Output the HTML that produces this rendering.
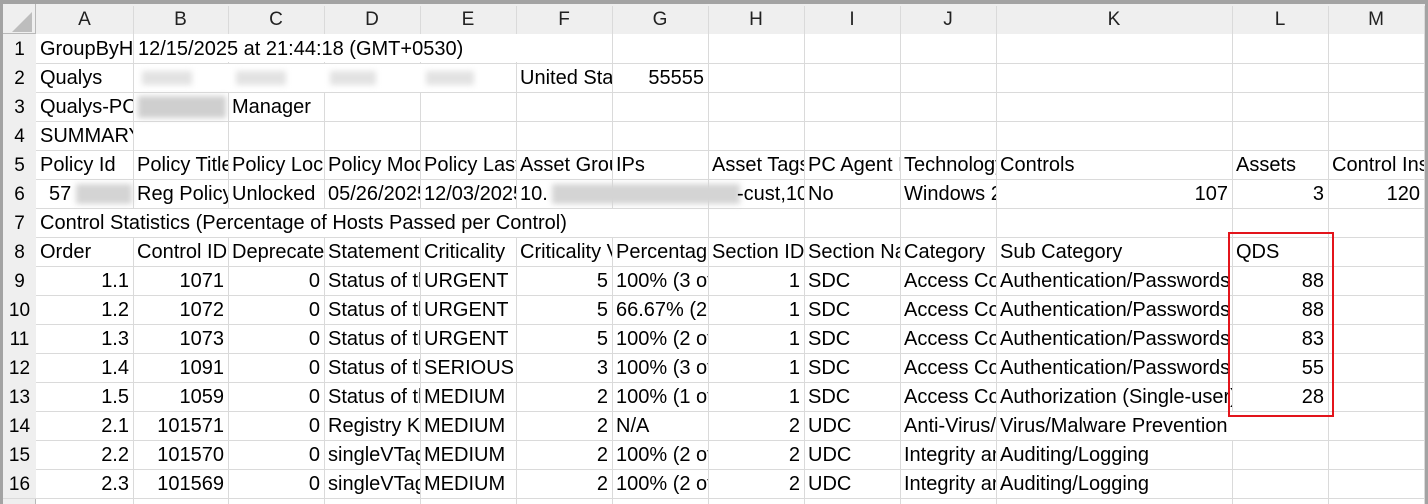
<!DOCTYPE html>
<html><head><meta charset="utf-8"><style>
body{margin:0;width:1428px;height:504px;overflow:hidden;background:#fff;font-family:"Liberation Sans",Arial,sans-serif;font-size:20px;color:#000;position:relative}
.c{position:absolute;height:29px;line-height:31px;white-space:nowrap;overflow:hidden;padding:0 4px;box-sizing:border-box}
.r{text-align:right}
.h{position:absolute;top:4px;height:30px;line-height:32px;text-align:center;font-size:19px;background:#efefef;color:#222}
.v{position:absolute;width:1px;background:#dadada}
.hl{position:absolute;height:1px;background:#dadada}
.rn{position:absolute;left:3px;width:33px;text-align:center;background:#efefef;height:29px;line-height:31px;font-size:19px}
.b{position:absolute;background:#d4d4d4;filter:blur(3px)}
</style></head><body>
<div style="position:absolute;left:0;top:0;width:1428px;height:4px;background:#a3a3a3"></div>
<div style="position:absolute;left:0;top:0;width:3px;height:504px;background:#a3a3a3"></div>
<div style="position:absolute;right:0;top:0;width:3px;height:504px;background:#a3a3a3"></div>
<div style="position:absolute;left:3px;top:4px;width:1422px;height:30px;background:#efefef"></div>
<div style="position:absolute;left:3px;top:4px;width:33px;height:500px;background:#efefef"></div>
<div style="position:absolute;left:12px;top:12px;width:0;height:0;border-left:20px solid transparent;border-bottom:20px solid #bdbdbd"></div>
<div style="position:absolute;left:3px;top:33px;width:1422px;height:1px;background:#b8b8b8"></div>
<div style="position:absolute;left:35px;top:4px;width:1px;height:500px;background:#b8b8b8"></div>
<div class="h" style="left:36px;width:97px">A</div><div class="h" style="left:133px;width:95px">B</div><div class="h" style="left:228px;width:96px">C</div><div class="h" style="left:324px;width:96px">D</div><div class="h" style="left:420px;width:96px">E</div><div class="h" style="left:516px;width:96px">F</div><div class="h" style="left:612px;width:96px">G</div><div class="h" style="left:708px;width:96px">H</div><div class="h" style="left:804px;width:96px">I</div><div class="h" style="left:900px;width:96px">J</div><div class="h" style="left:996px;width:236px">K</div><div class="h" style="left:1232px;width:96px">L</div><div class="h" style="left:1328px;width:96px">M</div>
<div class="v" style="left:133px;top:6px;height:498px"></div><div class="v" style="left:228px;top:6px;height:498px"></div><div class="v" style="left:324px;top:6px;height:498px"></div><div class="v" style="left:420px;top:6px;height:498px"></div><div class="v" style="left:516px;top:6px;height:498px"></div><div class="v" style="left:612px;top:6px;height:498px"></div><div class="v" style="left:708px;top:6px;height:498px"></div><div class="v" style="left:804px;top:6px;height:498px"></div><div class="v" style="left:900px;top:6px;height:498px"></div><div class="v" style="left:996px;top:6px;height:498px"></div><div class="v" style="left:1232px;top:6px;height:498px"></div><div class="v" style="left:1328px;top:6px;height:498px"></div><div class="v" style="left:1424px;top:6px;height:498px"></div>
<div class="hl" style="left:3px;top:63px;width:1422px"></div><div class="hl" style="left:3px;top:92px;width:1422px"></div><div class="hl" style="left:3px;top:121px;width:1422px"></div><div class="hl" style="left:3px;top:150px;width:1422px"></div><div class="hl" style="left:3px;top:179px;width:1422px"></div><div class="hl" style="left:3px;top:208px;width:1422px"></div><div class="hl" style="left:3px;top:237px;width:1422px"></div><div class="hl" style="left:3px;top:266px;width:1422px"></div><div class="hl" style="left:3px;top:295px;width:1422px"></div><div class="hl" style="left:3px;top:324px;width:1422px"></div><div class="hl" style="left:3px;top:353px;width:1422px"></div><div class="hl" style="left:3px;top:382px;width:1422px"></div><div class="hl" style="left:3px;top:411px;width:1422px"></div><div class="hl" style="left:3px;top:440px;width:1422px"></div><div class="hl" style="left:3px;top:469px;width:1422px"></div><div class="hl" style="left:3px;top:498px;width:1422px"></div>
<div class="rn" style="top:34px">1</div><div class="rn" style="top:63px">2</div><div class="rn" style="top:92px">3</div><div class="rn" style="top:121px">4</div><div class="rn" style="top:150px">5</div><div class="rn" style="top:179px">6</div><div class="rn" style="top:208px">7</div><div class="rn" style="top:237px">8</div><div class="rn" style="top:266px">9</div><div class="rn" style="top:295px">10</div><div class="rn" style="top:324px">11</div><div class="rn" style="top:353px">12</div><div class="rn" style="top:382px">13</div><div class="rn" style="top:411px">14</div><div class="rn" style="top:440px">15</div><div class="rn" style="top:469px">16</div>
<div class="c" style="left:36px;top:34px;width:97px">GroupByHost</div>
<div class="c" style="left:134px;top:34px;width:390px;height:28px;background:#fff">12/15/2025 at 21:44:18 (GMT+0530)</div>
<div style="position:absolute;left:134px;top:64px;width:382px;height:28px;background:#fff"></div>
<div class="b" style="left:142px;top:71px;width:50px;height:14px;background:#e2e2e2"></div>
<div class="b" style="left:236px;top:71px;width:50px;height:14px;background:#e2e2e2"></div>
<div class="b" style="left:330px;top:71px;width:46px;height:14px;background:#e2e2e2"></div>
<div class="b" style="left:426px;top:71px;width:48px;height:14px;background:#e2e2e2"></div>
<div class="b" style="left:138px;top:96px;width:88px;height:22px;background:#cfcfcf"></div>
<div class="b" style="left:76px;top:184px;width:56px;height:20px"></div>
<div class="b" style="left:552px;top:184px;width:188px;height:20px"></div>
<div class="c" style="left:36px;top:63px;width:97px">Qualys</div>
<div class="c" style="left:516px;top:63px;width:96px">United States</div>
<div class="c r" style="left:612px;top:63px;width:96px">55555</div>
<div class="c" style="left:36px;top:92px;width:97px">Qualys-PC</div>
<div class="c" style="left:228px;top:92px;width:96px">Manager</div>
<div class="c" style="left:36px;top:121px;width:97px">SUMMARY</div>
<div class="c" style="left:36px;top:150px;width:97px">Policy Id</div><div class="c" style="left:133px;top:150px;width:95px">Policy Title</div><div class="c" style="left:228px;top:150px;width:96px">Policy Locked</div><div class="c" style="left:324px;top:150px;width:96px">Policy Modified</div><div class="c" style="left:420px;top:150px;width:96px">Policy Last</div><div class="c" style="left:516px;top:150px;width:96px">Asset Groups</div><div class="c" style="left:612px;top:150px;width:96px">IPs</div><div class="c" style="left:708px;top:150px;width:96px">Asset Tags</div><div class="c" style="left:804px;top:150px;width:96px">PC Agent I</div><div class="c" style="left:900px;top:150px;width:96px">Technology</div><div class="c" style="left:996px;top:150px;width:236px">Controls</div><div class="c" style="left:1232px;top:150px;width:96px">Assets</div><div class="c" style="left:1328px;top:150px;width:96px">Control Instances</div>
<div class="c" style="left:36px;top:179px;width:40px;padding-left:13px">57</div><div class="c" style="left:133px;top:179px;width:95px">Reg Policy</div><div class="c" style="left:228px;top:179px;width:96px">Unlocked</div><div class="c" style="left:324px;top:179px;width:96px">05/26/2025</div><div class="c" style="left:420px;top:179px;width:96px">12/03/2025</div><div class="c" style="left:516px;top:179px;width:40px">10.</div><div class="c" style="left:737px;top:179px;width:67px;padding:0">-cust,10</div><div class="c" style="left:804px;top:179px;width:96px">No</div><div class="c" style="left:900px;top:179px;width:96px">Windows 2016</div><div class="c r" style="left:996px;top:179px;width:236px">107</div><div class="c r" style="left:1232px;top:179px;width:96px">3</div><div class="c r" style="left:1328px;top:179px;width:96px">120</div>
<div class="c" style="left:36px;top:209px;width:640px;height:28px;line-height:29px;background:#fff">Control Statistics (Percentage of Hosts Passed per Control)</div>
<div class="c" style="left:36px;top:237px;width:97px">Order</div><div class="c" style="left:133px;top:237px;width:95px">Control ID</div><div class="c" style="left:228px;top:237px;width:96px">Deprecated</div><div class="c" style="left:324px;top:237px;width:96px">Statement</div><div class="c" style="left:420px;top:237px;width:96px">Criticality</div><div class="c" style="left:516px;top:237px;width:96px">Criticality Value</div><div class="c" style="left:612px;top:237px;width:96px">Percentage</div><div class="c" style="left:708px;top:237px;width:96px">Section ID</div><div class="c" style="left:804px;top:237px;width:96px">Section Name</div><div class="c" style="left:900px;top:237px;width:96px">Category</div><div class="c" style="left:996px;top:237px;width:236px">Sub Category</div><div class="c" style="left:1232px;top:237px;width:96px">QDS</div>
<div class="c r" style="left:36px;top:266px;width:97px">1.1</div><div class="c r" style="left:133px;top:266px;width:95px">1071</div><div class="c r" style="left:228px;top:266px;width:96px">0</div><div class="c" style="left:324px;top:266px;width:96px">Status of the</div><div class="c" style="left:420px;top:266px;width:96px">URGENT</div><div class="c r" style="left:516px;top:266px;width:96px">5</div><div class="c" style="left:612px;top:266px;width:96px">100% (3 of 3)</div><div class="c r" style="left:708px;top:266px;width:96px">1</div><div class="c" style="left:804px;top:266px;width:96px">SDC</div><div class="c" style="left:900px;top:266px;width:96px">Access Control</div><div class="c" style="left:996px;top:266px;width:236px">Authentication/Passwords</div><div class="c r" style="left:1232px;top:266px;width:96px">88</div>
<div class="c r" style="left:36px;top:295px;width:97px">1.2</div><div class="c r" style="left:133px;top:295px;width:95px">1072</div><div class="c r" style="left:228px;top:295px;width:96px">0</div><div class="c" style="left:324px;top:295px;width:96px">Status of the</div><div class="c" style="left:420px;top:295px;width:96px">URGENT</div><div class="c r" style="left:516px;top:295px;width:96px">5</div><div class="c" style="left:612px;top:295px;width:96px">66.67% (2 of 3)</div><div class="c r" style="left:708px;top:295px;width:96px">1</div><div class="c" style="left:804px;top:295px;width:96px">SDC</div><div class="c" style="left:900px;top:295px;width:96px">Access Control</div><div class="c" style="left:996px;top:295px;width:236px">Authentication/Passwords</div><div class="c r" style="left:1232px;top:295px;width:96px">88</div>
<div class="c r" style="left:36px;top:324px;width:97px">1.3</div><div class="c r" style="left:133px;top:324px;width:95px">1073</div><div class="c r" style="left:228px;top:324px;width:96px">0</div><div class="c" style="left:324px;top:324px;width:96px">Status of the</div><div class="c" style="left:420px;top:324px;width:96px">URGENT</div><div class="c r" style="left:516px;top:324px;width:96px">5</div><div class="c" style="left:612px;top:324px;width:96px">100% (2 of 2)</div><div class="c r" style="left:708px;top:324px;width:96px">1</div><div class="c" style="left:804px;top:324px;width:96px">SDC</div><div class="c" style="left:900px;top:324px;width:96px">Access Control</div><div class="c" style="left:996px;top:324px;width:236px">Authentication/Passwords</div><div class="c r" style="left:1232px;top:324px;width:96px">83</div>
<div class="c r" style="left:36px;top:353px;width:97px">1.4</div><div class="c r" style="left:133px;top:353px;width:95px">1091</div><div class="c r" style="left:228px;top:353px;width:96px">0</div><div class="c" style="left:324px;top:353px;width:96px">Status of the</div><div class="c" style="left:420px;top:353px;width:96px">SERIOUS</div><div class="c r" style="left:516px;top:353px;width:96px">3</div><div class="c" style="left:612px;top:353px;width:96px">100% (3 of 3)</div><div class="c r" style="left:708px;top:353px;width:96px">1</div><div class="c" style="left:804px;top:353px;width:96px">SDC</div><div class="c" style="left:900px;top:353px;width:96px">Access Control</div><div class="c" style="left:996px;top:353px;width:236px">Authentication/Passwords</div><div class="c r" style="left:1232px;top:353px;width:96px">55</div>
<div class="c r" style="left:36px;top:382px;width:97px">1.5</div><div class="c r" style="left:133px;top:382px;width:95px">1059</div><div class="c r" style="left:228px;top:382px;width:96px">0</div><div class="c" style="left:324px;top:382px;width:96px">Status of the</div><div class="c" style="left:420px;top:382px;width:96px">MEDIUM</div><div class="c r" style="left:516px;top:382px;width:96px">2</div><div class="c" style="left:612px;top:382px;width:96px">100% (1 of 1)</div><div class="c r" style="left:708px;top:382px;width:96px">1</div><div class="c" style="left:804px;top:382px;width:96px">SDC</div><div class="c" style="left:900px;top:382px;width:96px">Access Control</div><div class="c" style="left:996px;top:382px;width:236px">Authorization (Single-user)</div><div class="c r" style="left:1232px;top:382px;width:96px">28</div>
<div class="c r" style="left:36px;top:411px;width:97px">2.1</div><div class="c r" style="left:133px;top:411px;width:95px">101571</div><div class="c r" style="left:228px;top:411px;width:96px">0</div><div class="c" style="left:324px;top:411px;width:96px">Registry Key</div><div class="c" style="left:420px;top:411px;width:96px">MEDIUM</div><div class="c r" style="left:516px;top:411px;width:96px">2</div><div class="c" style="left:612px;top:411px;width:96px">N/A</div><div class="c r" style="left:708px;top:411px;width:96px">2</div><div class="c" style="left:804px;top:411px;width:96px">UDC</div><div class="c" style="left:900px;top:411px;width:96px">Anti-Virus/Malware</div><div class="c" style="left:997px;top:412px;width:300px;height:28px;line-height:29px;padding-left:3px;background:#fff">Virus/Malware Prevention</div>
<div class="c r" style="left:36px;top:440px;width:97px">2.2</div><div class="c r" style="left:133px;top:440px;width:95px">101570</div><div class="c r" style="left:228px;top:440px;width:96px">0</div><div class="c" style="left:324px;top:440px;width:96px">singleVTag</div><div class="c" style="left:420px;top:440px;width:96px">MEDIUM</div><div class="c r" style="left:516px;top:440px;width:96px">2</div><div class="c" style="left:612px;top:440px;width:96px">100% (2 of 2)</div><div class="c r" style="left:708px;top:440px;width:96px">2</div><div class="c" style="left:804px;top:440px;width:96px">UDC</div><div class="c" style="left:900px;top:440px;width:96px">Integrity and</div><div class="c" style="left:996px;top:440px;width:236px">Auditing/Logging</div>
<div class="c r" style="left:36px;top:469px;width:97px">2.3</div><div class="c r" style="left:133px;top:469px;width:95px">101569</div><div class="c r" style="left:228px;top:469px;width:96px">0</div><div class="c" style="left:324px;top:469px;width:96px">singleVTag</div><div class="c" style="left:420px;top:469px;width:96px">MEDIUM</div><div class="c r" style="left:516px;top:469px;width:96px">2</div><div class="c" style="left:612px;top:469px;width:96px">100% (2 of 2)</div><div class="c r" style="left:708px;top:469px;width:96px">2</div><div class="c" style="left:804px;top:469px;width:96px">UDC</div><div class="c" style="left:900px;top:469px;width:96px">Integrity and</div><div class="c" style="left:996px;top:469px;width:236px">Auditing/Logging</div>
<div style="position:absolute;left:1228px;top:232px;width:102px;height:181px;border:2px solid #e3141b"></div>
</body></html>
